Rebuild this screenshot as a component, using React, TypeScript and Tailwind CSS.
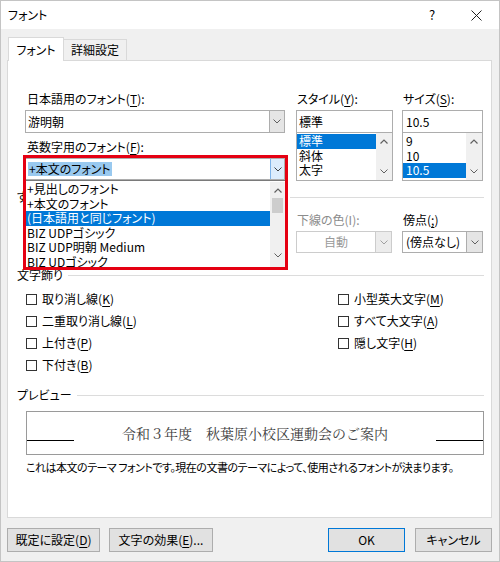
import React from "react";

const Chevron = ({ color = "#606060" }: { color?: string }) => (
  <svg width="8" height="5" viewBox="0 0 8 5" fill="none">
    <path d="M0.5 0.5 L4 4 L7.5 0.5" stroke={color} strokeWidth="1" />
  </svg>
);

const Up = () => (
  <svg width="8" height="5" viewBox="0 0 8 5" fill="none">
    <path d="M0.5 4.5 L4 1 L7.5 4.5" stroke="#606060" strokeWidth="1.2" />
  </svg>
);

const U = ({ children }: { children: React.ReactNode }) => (
  <span className="underline underline-offset-[2px]">{children}</span>
);

const Heading = ({ children, className = "" }: { children: React.ReactNode; className?: string }) => (
  <div className={"flex items-center h-[14px] leading-[14px] " + className}>
    <span className="whitespace-nowrap">{children}</span>
    <div className="flex-1 h-px bg-[#dcdcdc] ml-[5px]" />
  </div>
);

const Check = ({ children }: { children: React.ReactNode }) => (
  <div className="flex items-center h-[22px]">
    <div className="w-[11px] h-[11px] border border-[#333333] bg-white" />
    <span className="ml-[5px] leading-[14px]">{children}</span>
  </div>
);

export default function App() {
  return (
    <div className="w-[500px] h-[562px] bg-[#f0f0f0] border border-[#c4c4c4] flex flex-col text-[12px] text-black font-['Noto_Sans_CJK_JP',sans-serif] [font-feature-settings:'palt'] overflow-hidden">
      {/* title bar */}
      <div className="h-[28px] bg-white flex items-center shrink-0">
        <span className="ml-[7px] leading-[14px]">フォント</span>
        <div className="flex-1" />
        <span className="w-[12px] text-center mr-[33px] text-[13px]">?</span>
        <svg width="11" height="11" viewBox="0 0 11 11" className="mr-[17px]">
          <path d="M0.5 0.5 L10.5 10.5 M10.5 0.5 L0.5 10.5" stroke="#222" strokeWidth="1" />
        </svg>
      </div>

      {/* tabs */}
      <div className="flex items-end ml-[7px] mt-[8px] h-[24px] relative z-10">
        <div className="w-[56px] h-[24px] bg-white border border-[#d9d9d9] border-b-0 flex items-center justify-center">
          <span className="leading-[14px]">フォント</span>
        </div>
        <div className="w-[63px] h-[22px] bg-[#f0f0f0] border border-[#d9d9d9] border-l-0 flex items-center justify-center">
          <span className="leading-[14px]">詳細設定</span>
        </div>
      </div>

      {/* panel */}
      <div className="ml-[6px] w-[485px] h-[458px] bg-white border border-[#d9d9d9] -mt-px pl-[9px] pr-[7px] pt-[31px] flex flex-col shrink-0">
        {/* Section A */}
        <div className="flex ml-[8px] h-[89px]">
          <div className="w-[260px] flex flex-col">
            <div className="h-[14px] leading-[14px] pl-[2px]">日本語用のフォント(<U>T</U>):</div>
            <div className="mt-[4px] h-[23px] border border-[#adadad] flex items-center">
              <span className="pl-[2px] flex-1 leading-[14px]">游明朝</span>
              <div className="w-[15px] h-full bg-[#e5e5e5] border-l border-[#adadad] flex items-center justify-center">
                <Chevron />
              </div>
            </div>
            <div className="mt-[7px] h-[14px] leading-[14px] pl-[2px]">英数字用のフォント(<U>F</U>):</div>
            <div className="mt-[4px] h-[22px] relative z-20">
              <div className="h-[22px] border border-[#adadad] flex items-center bg-white">
                <span className="ml-[2px] leading-[14px] bg-[#99c9ef] px-[1px]">+本文のフォント</span>
                <div className="flex-1" />
                <div className="w-[14px] h-full bg-[#dcecfc] border-l border-[#7eb4ea] flex items-center justify-center">
                  <Chevron color="#3f3f3f" />
                </div>
              </div>
              {/* dropdown list */}
              <div className="absolute left-0 top-[22px] w-[260px] h-[87px] bg-white border-t border-[#7a7a7a] flex overflow-hidden pt-[1px]">
                <div className="flex-1 flex flex-col">
                  <div className="h-[14.6px] leading-[14.6px] pl-[2px] whitespace-nowrap">+見出しのフォント</div>
                  <div className="h-[14.6px] leading-[14.6px] pl-[2px] whitespace-nowrap">+本文のフォント</div>
                  <div className="h-[14.6px] leading-[14.6px] pl-[2px] whitespace-nowrap bg-[#0078d7] text-white">(日本語用と同じフォント)</div>
                  <div className="h-[14.6px] leading-[14.6px] pl-[2px] whitespace-nowrap">BIZ UDPゴシック</div>
                  <div className="h-[14.6px] leading-[14.6px] pl-[2px] whitespace-nowrap">BIZ UDP明朝 Medium</div>
                  <div className="h-[14.6px] leading-[14.6px] pl-[2px] whitespace-nowrap">BIZ UDゴシック</div>
                </div>
                <div className="w-[15px] bg-[#f0f0f0] flex flex-col items-center">
                  <div className="h-[16px] flex items-center justify-center"><Up /></div>
                  <div className="w-[11px] h-[15px] bg-[#cdcdcd]" />
                  <div className="flex-1" />
                  <div className="h-[16px] flex items-center justify-center mb-[4px]"><Chevron /></div>
                </div>
              </div>
              {/* red annotation box */}
              <div className="absolute left-[-2px] top-[-3px] w-[265px] h-[115px] border-[3px] border-[#e50012] pointer-events-none" />
            </div>
          </div>

          <div className="w-[97px] ml-[11px] flex flex-col">
            <div className="h-[14px] leading-[14px] pl-[1px]">スタイル(<U>Y</U>):</div>
            <div className="mt-[4px] h-[23px] border border-[#adadad] flex items-center">
              <span className="pl-[2px] leading-[14px]">標準</span>
            </div>
            <div className="h-[48px] border border-t-0 border-[#adadad] flex">
              <div className="flex-1 flex flex-col pt-[1px]">
                <div className="h-[14.5px] leading-[14.5px] pl-[2px] bg-[#0078d7] text-white">標準</div>
                <div className="h-[14.5px] leading-[14.5px] pl-[2px]">斜体</div>
                <div className="h-[14.5px] leading-[14.5px] pl-[2px]">太字</div>
              </div>
              <div className="w-[16px] bg-[#f0f0f0] flex flex-col items-center justify-between py-[6px]">
                <Up />
                <Chevron />
              </div>
            </div>
          </div>

          <div className="w-[81px] ml-[9px] flex flex-col">
            <div className="h-[14px] leading-[14px] pl-[1px]">サイズ(<U>S</U>):</div>
            <div className="mt-[4px] h-[23px] border border-[#adadad] flex items-center">
              <span className="pl-[3px] leading-[14px]">10.5</span>
            </div>
            <div className="h-[48px] border border-t-0 border-[#adadad] flex">
              <div className="flex-1 flex flex-col pt-[1px]">
                <div className="h-[14.5px] leading-[14.5px] pl-[3px]">9</div>
                <div className="h-[14.5px] leading-[14.5px] pl-[3px]">10</div>
                <div className="h-[14.5px] leading-[14.5px] pl-[3px] bg-[#0078d7] text-white">10.5</div>
              </div>
              <div className="w-[16px] bg-[#f0f0f0] flex flex-col items-center justify-between py-[6px]">
                <Up />
                <Chevron />
              </div>
            </div>
          </div>
        </div>

        {/* Section B: heading mostly covered by the dropdown */}
        <div className="flex items-center h-[14px] leading-[14px] mt-[9px]">
          <span className="w-[6px] overflow-hidden whitespace-nowrap">す</span>
          <div className="w-[267px]" />
          <div className="flex-1 h-px bg-[#dcdcdc]" />
        </div>
        <div className="flex ml-[8px] mt-[9px]">
          <div className="w-[260px]" />
          <div className="w-[96px] ml-[11px] flex flex-col">
            <div className="h-[14px] leading-[14px] pl-[1px] text-[#8c8c8c]">下線の色(I):</div>
            <div className="mt-[4px] h-[22px] border border-[#cccccc] flex items-center">
              <span className="flex-1 text-center text-[#9a9a9a] leading-[14px]">自動</span>
              <div className="w-[16px] h-full bg-[#ececec] border-l border-[#cccccc] flex items-center justify-center">
                <Chevron color="#a0a0a0" />
              </div>
            </div>
          </div>
          <div className="w-[81px] ml-[10px] flex flex-col">
            <div className="h-[14px] leading-[14px] pl-[1px]">傍点(<U>;</U>)</div>
            <div className="mt-[4px] h-[22px] border border-[#adadad] flex items-center">
              <span className="flex-1 pl-[3px] leading-[14px] whitespace-nowrap">(傍点なし)</span>
              <div className="w-[16px] h-full bg-[#e5e5e5] border-l border-[#adadad] flex items-center justify-center">
                <Chevron />
              </div>
            </div>
          </div>
        </div>

        {/* Section C */}
        <Heading className="mt-[15px]">文字飾り</Heading>
        <div className="flex ml-[9px] mt-[6px]">
          <div className="w-[312px] flex flex-col">
            <Check>取り消し線(<U>K</U>)</Check>
            <Check>二重取り消し線(<U>L</U>)</Check>
            <Check>上付き(<U>P</U>)</Check>
            <Check>下付き(<U>B</U>)</Check>
          </div>
          <div className="flex flex-col">
            <Check>小型英大文字(<U>M</U>)</Check>
            <Check>すべて大文字(<U>A</U>)</Check>
            <Check>隠し文字(<U>H</U>)</Check>
          </div>
        </div>

        {/* Section D */}
        <Heading className="mt-[12px]">プレビュー</Heading>
        <div className="ml-[9px] mt-[9px] h-[44px] border border-[#9a9a9a] flex items-center">
          <div className="w-[47px] h-px bg-black mt-[14px]" />
          <div className="flex-1 text-center text-[14px] leading-[18px] text-[#404040] font-['Noto_Serif_CJK_JP','Noto_Sans_CJK_JP',serif] whitespace-nowrap [font-feature-settings:normal]">
            令和３年度　秋葉原小校区運動会のご案内
          </div>
          <div className="w-[47px] h-px bg-black mt-[14px]" />
        </div>
        <div className="ml-[9px] mt-[5px] h-[14px] leading-[14px] whitespace-nowrap text-[11px] tracking-[-0.5px]">
          これは本文のテーマ フォントです。現在の文書のテーマによって、使用されるフォントが決まります。
        </div>
      </div>

      {/* buttons */}
      <div className="flex ml-[6px] mt-[10px]">
        <div className="w-[93px] h-[24px] bg-[#e1e1e1] border border-[#adadad] flex items-center justify-center">
          <span className="leading-[14px]">既定に設定(<U>D</U>)</span>
        </div>
        <div className="w-[104px] h-[24px] ml-[9px] bg-[#e1e1e1] border border-[#adadad] flex items-center justify-center">
          <span className="leading-[14px]">文字の効果(<U>E</U>)...</span>
        </div>
        <div className="flex-1" />
        <div className="w-[77px] h-[24px] bg-[#e1e1e1] border border-[#0078d7] flex items-center justify-center">
          <span className="leading-[14px]">OK</span>
        </div>
        <div className="w-[77px] h-[24px] ml-[10px] mr-[7px] bg-[#e1e1e1] border border-[#adadad] flex items-center justify-center">
          <span className="leading-[14px]">キャンセル</span>
        </div>
      </div>
    </div>
  );
}
